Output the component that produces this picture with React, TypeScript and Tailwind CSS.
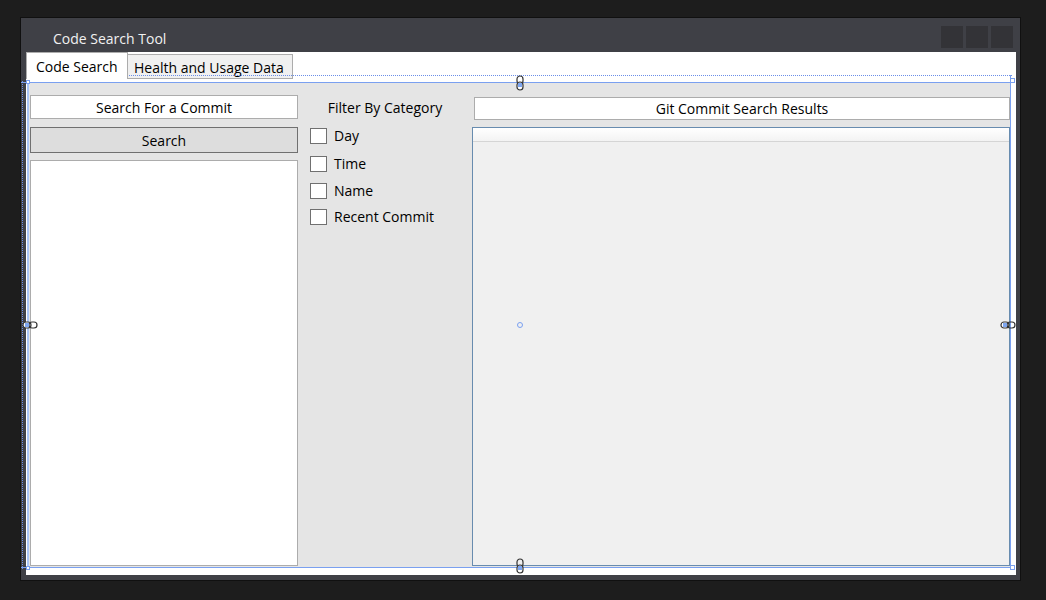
import React from "react";

const font = "font-['Open_Sans','Noto_Sans',sans-serif]";

function Check({ label }: { label: string }) {
  return (
    <div className="flex items-center h-[16px] gap-[7px]">
      <div className="w-[17px] h-[16px] bg-white border border-[#707070]" />
      <span className="text-[14px] leading-none text-[#000] -mt-[1px]">{label}</span>
    </div>
  );
}

function LinkHandle({ vertical }: { vertical?: boolean }) {
  return vertical ? (
    <svg width="10" height="16" viewBox="0 0 10 16">
      <rect x="2" y="1" width="6" height="8" rx="3" fill="none" stroke="#333" strokeWidth="1.2" />
      <rect x="2" y="7" width="6" height="8" rx="3" fill="#fff" stroke="#333" strokeWidth="1.2" />
      <rect x="3" y="8" width="4" height="4" fill="#7ea6f0" />
    </svg>
  ) : (
    <svg width="16" height="10" viewBox="0 0 16 10">
      <rect x="1" y="2" width="8" height="6" rx="3" fill="#fff" stroke="#333" strokeWidth="1.2" />
      <rect x="7" y="2" width="8" height="6" rx="3" fill="none" stroke="#333" strokeWidth="1.2" />
      <rect x="3" y="3" width="4" height="4" fill="#7ea6f0" />
    </svg>
  );
}

export default function App() {
  return (
    <div className={`w-[1046px] h-[600px] bg-[#1d1d1d] overflow-hidden relative ${font}`}>
      <div className="pt-[17px] pl-[20px]">
        <div className="w-[1001px] h-[564px] border border-[#101010] bg-[#3f4046] flex flex-col">
          {/* Title bar */}
          <div className="h-[34px] flex items-center justify-between pl-[32px] pr-[7px]">
            <span className="text-[14px] text-[#f1f1f1] mt-[7px]">Code Search Tool</span>
            <div className="flex gap-[3px] mt-[3px]">
              <div className="w-[22px] h-[22px] bg-[#333337]" />
              <div className="w-[22px] h-[22px] bg-[#333337]" />
              <div className="w-[22px] h-[22px] bg-[#333337]" />
            </div>
          </div>
          {/* Content */}
          <div className="ml-[5px] mr-[4px] h-[523px] bg-white flex flex-col relative">
            {/* Tab strip */}
            <div className="h-[27px] flex items-end relative">
              <div className="h-[27px] w-[102px] border border-b-0 border-[#acacac] bg-white flex items-center pl-[9px] text-[14px] text-black z-10">
                Code Search
              </div>
              <div className="h-[25px] w-[165px] border border-l-0 border-[#acacac] bg-[#f0f0f0] flex items-center pl-[6px] pt-[1px] text-[14px] text-black">
                Health and Usage Data
              </div>
            </div>
            {/* Tab panel */}
            <div className="flex-1 pt-[4px] pl-[2px] pr-[6px] pb-[8px]">
              <div className="h-full bg-[#e5e5e5] flex">
                {/* Left column */}
                <div className="w-[270px] pl-[2px] pt-[12px] flex flex-col">
                  <div className="h-[24px] bg-white border border-[#acacac] flex items-center justify-center text-[14px] text-black">
                    Search For a Commit
                  </div>
                  <div className="mt-[8px] h-[26px] bg-[#dddddd] border border-[#707070] flex items-center justify-center text-[14px] text-black">
                    Search
                  </div>
                  <div className="mt-[7px] flex-1 bg-white border border-[#acacac] mb-[1px]" />
                </div>
                {/* Middle column */}
                <div className="w-[174px] pt-[16px] flex flex-col">
                  <div className="text-center text-[14px] text-black leading-[18px]">Filter By Category</div>
                  <div className="pl-[12px] mt-[11px] flex flex-col">
                    <Check label="Day" />
                    <div className="h-[12px]" />
                    <Check label="Time" />
                    <div className="h-[11px]" />
                    <Check label="Name" />
                    <div className="h-[10px]" />
                    <Check label="Recent Commit" />
                  </div>
                </div>
                {/* Right column */}
                <div className="flex-1 pt-[14px] flex flex-col">
                  <div className="ml-[2px] h-[23px] bg-white border border-[#acacac] flex items-center justify-center text-[14px] text-black">
                    Git Commit Search Results
                  </div>
                  <div className="mt-[7px] flex-1 mb-[1px] border border-[#688caf] bg-[#f0f0f0] flex flex-col">
                    <div className="h-[14px] bg-gradient-to-b from-[#ffffff] to-[#f3f3f3] border-b border-[#d5d5d5]" />
                  </div>
                </div>
              </div>
            </div>

            {/* Designer adornments (overlay) */}
            <div className="absolute left-[3px] right-[4px] top-[23px] border-t border-dotted border-[#6a8ee8]" />
            <div className="absolute left-[-4px] top-[29px] bottom-[6px] border-l border-dotted border-[#6a8ee8]" />
            <div className="absolute left-[-5px] right-[2px] top-[30px] h-[1px] bg-[#7aa0f0]" />
            <div className="absolute left-[-5px] right-[2px] bottom-[7px] h-[1px] bg-[#7aa0f0]" />
            <div className="absolute left-[1px] top-[30px] bottom-[7px] w-[2px] bg-[#a8c4f6]" />
            <div className="absolute right-[5px] top-[23px] bottom-[7px] w-[1px] bg-[#7aa0f0]" />
            <div className="absolute left-[0px] top-[28px] w-[4px] h-[4px] border border-[#7aa0f0] bg-white" />
            <div className="absolute right-[1px] top-[26px] w-[5px] h-[5px] border border-[#7aa0f0] bg-white" />
            <div className="absolute left-[0px] bottom-[5px] w-[4px] h-[4px] border border-[#7aa0f0] bg-white" />
            <div className="absolute right-[1px] bottom-[5px] w-[5px] h-[5px] border border-[#7aa0f0] bg-white" />
            <div className="absolute left-[489px] top-[23px]"><LinkHandle vertical /></div>
            <div className="absolute left-[489px] bottom-[1px]"><LinkHandle vertical /></div>
            <div className="absolute left-[-4px] top-[268px]"><LinkHandle /></div>
            <div className="absolute right-[0px] top-[268px]"><LinkHandle /></div>
            <div className="absolute left-[491px] top-[270px] w-[6px] h-[6px] rounded-full border border-[#7aa0f0]" />
          </div>
        </div>
      </div>
    </div>
  );
}
